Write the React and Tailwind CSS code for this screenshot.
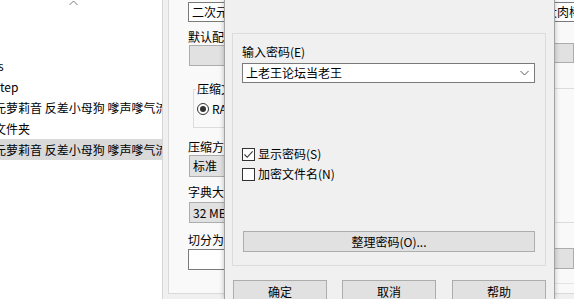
import React from 'react';

// 文件列表（左侧，已水平滚动，只露出一部分）
const listRows = [
  { text: 's', shift: '-ml-[2px]' },
  { text: 'tep', shift: 'ml-[0px]' },
  { text: '二次元萝莉音 反差小母狗 嗲声嗲气流水潺潺', shift: '-ml-[30px]' },
  { text: '新建文件夹', shift: '-ml-[30px]' },
  { text: '二次元萝莉音 反差小母狗 嗲声嗲气流水潺潺', shift: '-ml-[30px]', selected: true },
];

function FileList() {
  return (
    <div className="w-[163px] h-full shrink-0 bg-white border-r border-[#d4d4d4] overflow-hidden">
      <div className="h-[55px] pl-[69px]">
        <svg width="9" height="6" viewBox="0 0 9 6" className="block">
          <path d="M0.5 5 L4.5 1 L8.5 5" fill="none" stroke="#7a7a7a" strokeWidth="1" />
        </svg>
      </div>
      {listRows.map((row, i) => (
        <div
          key={i}
          className={`h-[21px] flex items-center whitespace-nowrap overflow-hidden ${row.selected ? 'bg-[#d9d9d9]' : ''}`}
        >
          <span className={`${row.shift} leading-[16px]`}>{row.text}</span>
        </div>
      ))}
    </div>
  );
}

function Label({ children, className = '' }) {
  return <div className={`leading-[16px] whitespace-nowrap ${className}`}>{children}</div>;
}

// 后面的“压缩文件名和参数”对话框，大部分被密码框挡住
function ArchiveDialog() {
  return (
    <div className="flex-1 h-full ml-[5px] overflow-hidden">
      <div className="h-[294px] border-l border-b border-[#d9d9d9] bg-[#f9f9f9] flex flex-col">
        <div className="pl-[19px] pt-[2px]">
          <div className="w-[420px] h-[20px] bg-white border border-[#7a7a7a] pl-[3px] flex items-center whitespace-nowrap overflow-hidden">
            <span className="w-[353px] shrink-0 overflow-hidden leading-[16px]">二次元萝莉音 反差小母狗 嗲声嗲气流水潺潺</span>
            <span className="leading-[16px]">大肉棒</span>
          </div>
        </div>
        <div className="flex flex-1">
          <div className="pl-[19px] w-[300px] shrink-0">
            <Label className="mt-[7px]">默认配置</Label>
            <div className="ml-[1px] w-[120px] h-[21px] bg-[#e1e1e1] border border-[#adadad]" />
            <fieldset className="mt-[15px] ml-[5px] w-[140px] border border-[#dcdcdc] pb-[11px]">
              <legend className="ml-[2px] px-[1px] leading-[16px]">压缩文件格式</legend>
              <div className="mt-[5px] pl-[3px] h-[14px] flex items-center">
                <span className="w-[12px] h-[12px] rounded-full border border-[#333333] bg-white flex items-center justify-center">
                  <span className="w-[6px] h-[6px] rounded-full bg-[#333333]" />
                </span>
                <span className="ml-[3px] leading-[16px]">RAR</span>
              </div>
            </fieldset>
            <Label className="mt-[11px]">压缩方式(C)</Label>
            <div className="ml-[1px] w-[120px] h-[22px] bg-[#e1e1e1] border border-[#adadad] pl-[3px] flex items-center leading-[16px]">标准</div>
            <Label className="mt-[7px]">字典大小(I)</Label>
            <div className="mt-[2px] ml-[1px] w-[120px] h-[21px] bg-[#e1e1e1] border border-[#adadad] pl-[3px] flex items-center leading-[16px]">32 MB</div>
            <Label className="mt-[9px]">切分为分卷(V)，大小</Label>
            <div className="mt-[1px] w-[120px] h-[21px] bg-white border border-[#7a7a7a]" />
          </div>
          <div className="ml-auto w-[40px] shrink-0">
            <div className="mt-[21px] h-[20px] bg-[#e1e1e1] border border-[#adadad]" />
            <div className="mt-[25px] h-[135px] border-t border-b border-[#dcdcdc]" />
            <div className="mt-[25px] h-[21px] bg-[#e1e1e1] border border-[#adadad]" />
            <div className="mt-[14px] border-t border-[#e3e3e3]" />
          </div>
        </div>
      </div>
    </div>
  );
}

function Checkbox({ checked, label }) {
  return (
    <div className="h-[20px] flex items-center">
      <span className="w-[13px] h-[13px] border border-[#333333] bg-white flex items-center justify-center">
        {checked && (
          <svg width="11" height="11" viewBox="0 0 11 11">
            <path d="M1.5 5.5 L4.2 8.3 L9.6 2.4" fill="none" stroke="#333333" strokeWidth="1.1" />
          </svg>
        )}
      </span>
      <span className="ml-[3px] leading-[16px]">{label}</span>
    </div>
  );
}

function WinButton({ children, className = '' }) {
  return (
    <div className={`h-[23px] w-[94px] bg-[#e1e1e1] border border-[#adadad] flex items-center justify-center leading-[16px] ${className}`}>
      {children}
    </div>
  );
}

// 前面的“输入密码”对话框
function PasswordDialog() {
  return (
    <div className="absolute left-[224px] top-0 w-[331px] h-[299px] bg-[#f0f0f0] border-l border-r border-[#a3a3a3] shadow-[0_0_5px_rgba(0,0,0,0.25)]">
      <div className="ml-[7px] mt-[33px] w-[314px] h-[233px] border border-[#dcdcdc] pl-[9px] pt-[10px]">
        <Label>输入密码(E)</Label>
        <div className="mt-[3px] w-[293px] h-[20px] bg-white border border-[#7a7a7a] pl-[3px] pr-[5px] flex items-center justify-between">
          <span className="leading-[16px]">上老王论坛当老王</span>
          <svg width="9" height="6" viewBox="0 0 9 6">
            <path d="M0.5 1 L4.5 5 L8.5 1" fill="none" stroke="#5a5a5a" strokeWidth="1" />
          </svg>
        </div>
        <div className="mt-[61px]">
          <Checkbox checked label="显示密码(S)" />
          <Checkbox label="加密文件名(N)" />
        </div>
        <div className="mt-[47px] ml-[1px] w-[292px] h-[21px] bg-[#e1e1e1] border border-[#adadad] flex items-center justify-center leading-[16px]">
          整理密码(O)...
        </div>
      </div>
      <div className="mt-[14px] ml-[8px] flex">
        <WinButton>确定</WinButton>
        <WinButton className="ml-[15px]">取消</WinButton>
        <WinButton className="ml-[16px]">帮助</WinButton>
      </div>
    </div>
  );
}

export default function App() {
  return (
    <div className="relative w-[574px] h-[299px] overflow-hidden flex bg-[#f0f0f0] text-[12px] text-black font-['Noto_Sans_CJK_SC','Noto_Sans',sans-serif]">
      <FileList />
      <ArchiveDialog />
      <PasswordDialog />
    </div>
  );
}
